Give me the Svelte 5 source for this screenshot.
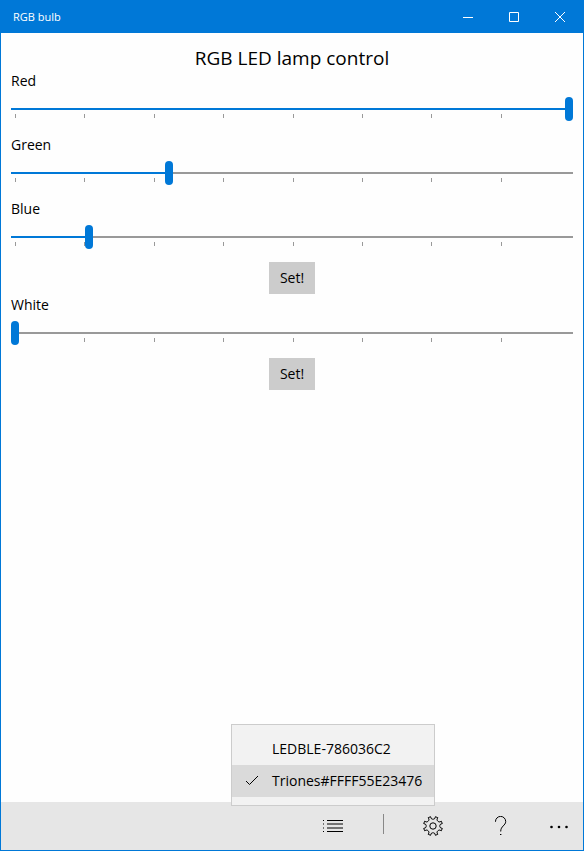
<script lang="ts">
	// slider values are single bytes, ticks every 32 steps
	const MAX = 255;
	const TICK = 32;
	const ticks = Array.from({ length: 8 }, (_, i) => Math.min(TICK, MAX - i * TICK));

	let rgb = $state([
		{ id: 'red', label: 'Red', value: 255 },
		{ id: 'green', label: 'Green', value: 71 },
		{ id: 'blue', label: 'Blue', value: 34 }
	]);
	let white = $state({ id: 'white', label: 'White', value: 0 });

	const devices = ['LEDBLE-786036C2', 'Triones#FFFF55E23476'];
	let selected = $state('Triones#FFFF55E23476');
	let showDevices = $state(true);
</script>

{#snippet slider(channel: { id: string; label: string; value: number })}
	<div class="channel">
		<label for={channel.id}>{channel.label}</label>
		<input
			id={channel.id}
			type="range"
			min="0"
			max={MAX}
			bind:value={channel.value}
			style="--fill: {(channel.value / MAX) * 100}%"
		/>
		<div class="ticks">
			{#each ticks as size}
				<span style="flex-grow: {size}"></span>
			{/each}
		</div>
	</div>
{/snippet}

<div class="window">
	<header>
		<span class="caption">RGB bulb</span>
		<button aria-label="Minimize">
			<svg width="10" height="10" viewBox="0 0 10 10"><path d="M0 5.5h10" /></svg>
		</button>
		<button aria-label="Maximize">
			<svg width="10" height="10" viewBox="0 0 10 10"><path d="M.5.5h9v9h-9z" /></svg>
		</button>
		<button aria-label="Close">
			<svg width="10" height="10" viewBox="0 0 10 10"><path d="M0 0l10 10M10 0L0 10" /></svg>
		</button>
	</header>

	<main>
		<h1>RGB LED lamp control</h1>
		{#each rgb as channel}
			{@render slider(channel)}
		{/each}
		<button class="set">Set!</button>
		{@render slider(white)}
		<button class="set">Set!</button>
	</main>

	<footer>
		<div class="devices">
			<button class="command" aria-label="Devices" onclick={() => (showDevices = !showDevices)}>
				<svg width="20" height="20" viewBox="0 0 20 20">
					<path d="M4 4.5h16M4 8h16M4 12h16M4 15.5h16" />
					<path d="M0 4.5h1M0 8h1M0 12h1M0 15.5h1" />
				</svg>
			</button>
			{#if showDevices}
				<div class="menu" role="menu">
					{#each devices as device}
						<button
							role="menuitemradio"
							aria-checked={device === selected}
							class:selected={device === selected}
							onclick={() => (selected = device)}
						>
							<svg width="14" height="14" viewBox="0 0 14 14">
								{#if device === selected}
									<path d="M1 7l3.500 3.500L13 2" />
								{/if}
							</svg>
							{device}
						</button>
					{/each}
				</div>
			{/if}
		</div>
		<span class="separator"></span>
		<button class="command" aria-label="Settings">
			<svg width="20" height="20" viewBox="0 0 20 20" stroke-linejoin="round">
				<path
					d="M7.6.7L8 2Q8.4 3.200 9.600 3.200h.8Q11.600 3.200 12 2L12.400.7 14.800 1.700 14.200 2.900Q13.700 4 14.500 4.800L15.200 5.500Q16 6.300 17.100 5.800L18.300 5.200 19.300 7.600 18 8Q16.800 8.400 16.800 9.600v.8Q16.800 11.600 18 12L19.300 12.400 18.300 14.800 17.100 14.200Q16 13.700 15.200 14.500L14.500 15.200Q13.700 16 14.200 17.100L14.800 18.300 12.400 19.300 12 18Q11.600 16.800 10.400 16.800h-.8Q8.400 16.800 8 18L7.600 19.300 5.200 18.300 5.800 17.100Q6.300 16 5.500 15.200L4.800 14.500Q4 13.700 2.900 14.200L1.700 14.800.7 12.400 2 12Q3.200 11.600 3.200 10.400v-.8Q3.200 8.400 2 8L.7 7.600 1.700 5.200 2.900 5.800Q4 6.300 4.800 5.500L5.500 4.800Q6.300 4 5.800 2.900L5.200 1.700z"
				/>
				<circle cx="10" cy="10" r="3.2" />
			</svg>
		</button>
		<button class="command" aria-label="Help">
			<svg width="20" height="20" viewBox="0 0 20 20">
				<path d="M4.500 6V5.500a5 5 0 0 1 10.200 0c0 4-5 4.500-5 10" />
				<path d="M9 18.500h1.400" />
			</svg>
		</button>
		<button class="command more" aria-label="More">
			<svg width="20" height="20" viewBox="0 0 20 20">
				<g class="dots">
					<circle cx="2.5" cy="11" r="1.3" />
					<circle cx="10" cy="11" r="1.3" />
					<circle cx="17.5" cy="11" r="1.3" />
				</g>
			</svg>
		</button>
	</footer>
</div>

<style>
	:global(body) {
		margin: 0;
	}
	.window {
		--accent: #0078d7;
		box-sizing: border-box;
		display: flex;
		flex-direction: column;
		min-height: 100vh;
		border: 1px solid var(--accent);
		border-top: 0;
		background: #fefefe;
		color: #000;
		font-family: 'Open Sans', 'Noto Sans', sans-serif;
		font-size: 14px;
		line-height: 20px;
	}
	button {
		margin: 0;
		padding: 0;
		border: 0;
		background: none;
		color: inherit;
		font: inherit;
	}
	svg {
		display: block;
		fill: none;
		stroke: currentColor;
	}
	header {
		display: flex;
		height: 33px;
		background: var(--accent);
		color: #fff;
	}
	.caption {
		flex: 1;
		padding-left: 12px;
		font-size: 11px;
		line-height: 33px;
	}
	header button {
		display: grid;
		place-items: center;
		width: 46px;
	}
	main {
		display: flex;
		flex: 1;
		flex-direction: column;
		padding: 13px 10px 10px;
	}
	h1 {
		margin: 0;
		font-size: 19px;
		font-weight: 400;
		line-height: 24px;
		text-align: center;
	}
	.channel {
		display: flex;
		flex-direction: column;
		height: 64px;
	}
	label {
		line-height: 22px;
		margin-bottom: 5px;
	}
	input {
		position: relative;
		appearance: none;
		width: 100%;
		height: 24px;
		margin: 0;
		background: none;
	}
	input::-webkit-slider-runnable-track {
		height: 24px;
		background: linear-gradient(to right, var(--accent) var(--fill), #999 var(--fill)) center / 100%
			2px no-repeat;
	}
	input::-webkit-slider-thumb {
		appearance: none;
		width: 8px;
		height: 24px;
		border-radius: 4px;
		background: var(--accent);
	}
	.ticks {
		display: flex;
		margin-top: -7px;
		padding: 0 5px 0 4px;
	}
	.ticks span {
		flex-basis: 0;
		box-sizing: border-box;
		height: 4px;
		border-left: 1px solid #999;
	}
	.set {
		align-self: center;
		width: 46px;
		height: 32px;
		background: #ccc;
	}
	footer {
		display: flex;
		justify-content: flex-end;
		height: 48px;
		background: #e6e6e6;
	}
	.devices {
		position: relative;
		display: flex;
	}
	.command {
		display: grid;
		place-items: center;
		width: 68px;
	}
	.more {
		width: 48px;
	}
	.dots {
		fill: #000;
		stroke: none;
	}
	.separator {
		width: 1px;
		height: 20px;
		margin: 12px 15px 0 16px;
		background: #888;
	}
	.menu {
		position: absolute;
		bottom: 44px;
		left: 50%;
		box-sizing: border-box;
		width: 204px;
		padding: 8px 0;
		border: 1px solid #ccc;
		background: #f2f2f2;
		transform: translateX(-50%);
	}
	.menu button {
		display: flex;
		gap: 13px;
		align-items: center;
		width: 100%;
		height: 32px;
		padding-left: 13px;
		white-space: nowrap;
	}
	.menu .selected {
		background: #dadada;
	}
</style>
